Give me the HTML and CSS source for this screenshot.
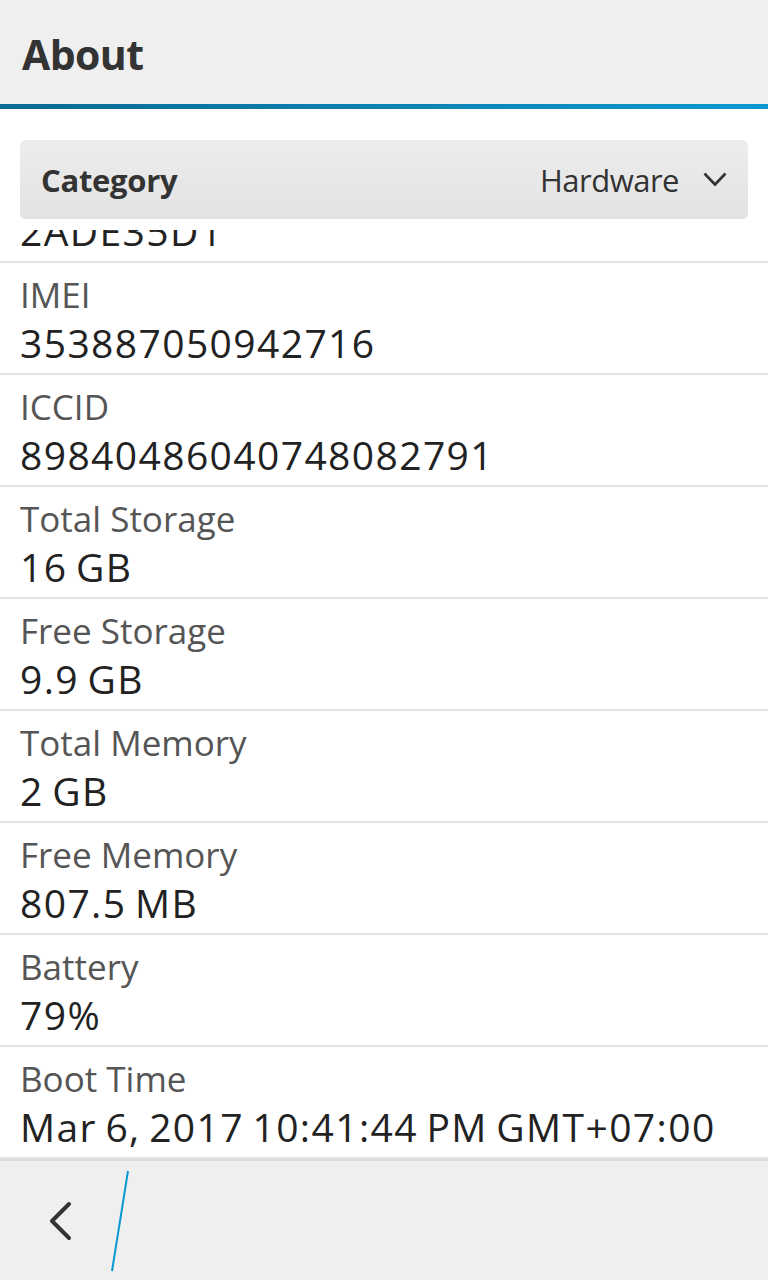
FILE: index.html
```html
<html>
    <head>
        <title>About</title>
        <link rel="stylesheet" href="styles.css">
    </head>
    <body>
        <div class="page">
            <header class="title-bar">
                <h1 class="title">About</h1>
            </header>
            <div class="accent"></div>

            <div class="content">
                <div class="dropdown">
                    <span class="dropdown-label">Category</span>
                    <span class="dropdown-value">Hardware</span>
                    <svg class="dropdown-arrow" width="24" height="15" viewBox="0 0 24 15">
                        <polyline points="1.5,1.5 12,12.5 22.5,1.5" fill="none" stroke="#333" stroke-width="2.6"/>
                    </svg>
                </div>

                <div class="list">
                    <!-- list is scrolled: only the tail of the PIN row shows -->
                    <div class="row row-clipped">
                        <div class="value">2ADE35D1</div>
                    </div>
                    <div class="row">
                        <div class="label">IMEI</div>
                        <div class="value">353887050942716</div>
                    </div>
                    <div class="row">
                        <div class="label">ICCID</div>
                        <div class="value">89840486040748082791</div>
                    </div>
                    <div class="row">
                        <div class="label">Total Storage</div>
                        <div class="value">16 GB</div>
                    </div>
                    <div class="row">
                        <div class="label">Free Storage</div>
                        <div class="value">9.9 GB</div>
                    </div>
                    <div class="row">
                        <div class="label">Total Memory</div>
                        <div class="value">2 GB</div>
                    </div>
                    <div class="row">
                        <div class="label">Free Memory</div>
                        <div class="value">807.5 MB</div>
                    </div>
                    <div class="row">
                        <div class="label">Battery</div>
                        <div class="value">79%</div>
                    </div>
                    <div class="row">
                        <div class="label">Boot Time</div>
                        <div class="value">Mar 6, 2017 10:41:44 PM GMT+07:00</div>
                    </div>
                </div>
            </div>

            <footer class="action-bar">
                <svg class="back" width="24" height="40" viewBox="0 0 24 40">
                    <polyline points="21,3 4,20 21,37" fill="none" stroke="#333" stroke-width="4" stroke-linecap="round" stroke-linejoin="round"/>
                </svg>
                <svg class="divider" width="20" height="102" viewBox="0 0 20 102">
                    <line x1="18" y1="1" x2="2" y2="101" stroke="#0a98d2" stroke-width="2"/>
                </svg>
            </footer>
        </div>
    </body>
</html>
```

FILE: styles.css
```css
body {
    margin: 0;
    font-family: "Open Sans", sans-serif;
    color: #222;
    background: #fff;
}

.page {
    width: 768px;
    height: 1280px;
    display: flex;
    flex-direction: column;
    overflow: hidden;
}

.title-bar {
    height: 104px;
    box-sizing: border-box;
    padding: 29px 22px 0;
    background: #efefef;
}

.title {
    margin: 0;
    font-size: 41px;
    line-height: 50px;
    font-weight: 700;
    color: #333;
    letter-spacing: -0.6px;
}

.accent {
    height: 5px;
    background: linear-gradient(to right, #0a6a94, #0a99d0);
}

.content {
    flex: 1;
    display: flex;
    flex-direction: column;
    padding-top: 31px;
    min-height: 0;
}

.dropdown {
    margin: 0 20px;
    height: 79px;
    display: flex;
    align-items: center;
    padding: 0 21px;
    border-radius: 5px;
    background: linear-gradient(#ededed, #e3e3e3);
    color: #333;
    font-size: 31px;
}

.dropdown-label {
    flex: 1;
    font-weight: 700;
    letter-spacing: -0.3px;
}

.dropdown-value {
    letter-spacing: -0.5px;
}

.dropdown-arrow {
    margin-left: 24px;
}

.list {
    flex: 1;
    margin-top: 11px;
    overflow: hidden;
    min-height: 0;
}

.row {
    padding: 9px 20px 5px;
    border-bottom: 2px solid #e3e3e3;
}

.row-clipped {
    margin-top: -33px;
}

.label {
    font-size: 35px;
    line-height: 46px;
    color: #555;
}

.value {
    font-size: 39px;
    line-height: 50px;
    color: #222;
    letter-spacing: 1.4px;
    word-spacing: -3px;
}

.action-bar {
    height: 121px;
    flex-shrink: 0;
    display: flex;
    align-items: center;
    border-top: 2px solid #dcdcdc;
    background: #efefef;
    box-sizing: border-box;
}

.back {
    margin-left: 48px;
}

.divider {
    margin-left: 38px;
}
```
